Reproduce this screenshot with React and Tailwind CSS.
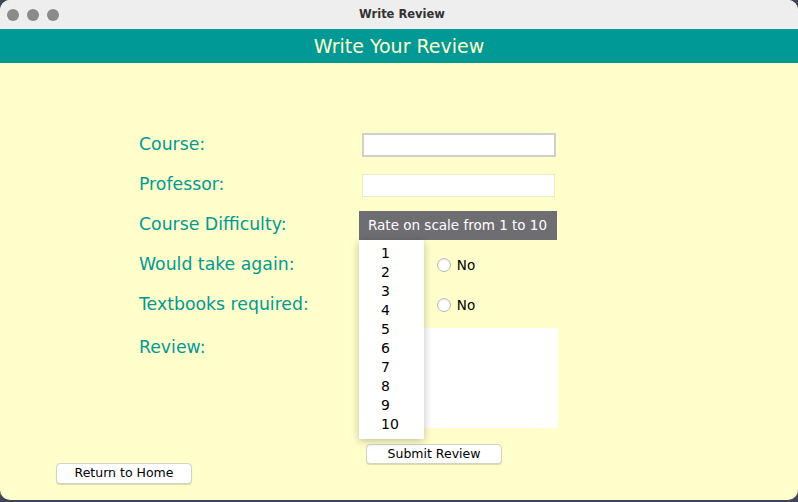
import React from "react";

const font = { fontFamily: '"DejaVu Sans", "Liberation Sans", sans-serif' };

function Radio({ label, faint }) {
  return (
    <label className={`flex items-center gap-[6px] text-[13.5px] ${faint ? "text-black/15" : "text-black"}`}>
      <span className="w-[14px] h-[14px] rounded-full bg-white border border-[#b8b8b8] shadow-[inset_0_1px_1px_rgba(0,0,0,0.08)]" />
      {label}
    </label>
  );
}

export default function App() {
  const options = [1, 2, 3, 4, 5, 6, 7, 8, 9, 10];

  return (
    <div className="w-[798px] h-[502px] bg-[#3d4556] overflow-hidden" style={font}>
      <div className="h-[500px] rounded-[10px] overflow-hidden bg-[#ffffcc] flex flex-col">
        {/* title bar */}
        <div className="h-[29px] bg-[#efeeef] flex items-center px-[7px] relative shrink-0">
          <div className="flex gap-[8px]">
            <span className="w-[12px] h-[12px] rounded-full bg-[#8a8a8a]" />
            <span className="w-[12px] h-[12px] rounded-full bg-[#8a8a8a]" />
            <span className="w-[12px] h-[12px] rounded-full bg-[#8a8a8a]" />
          </div>
          <div className="flex-1 text-center text-[11.5px] font-bold text-[#333] pr-[46px]">Write Review</div>
        </div>

        {/* header */}
        <div className="h-[34px] bg-[#019996] flex items-center justify-center shrink-0">
          <h1 className="text-[19px] text-[#ffffcc]">Write Your Review</h1>
        </div>

        {/* form */}
        <div className="flex-1 flex flex-col pt-[62px] relative">
          <div className="ml-[139px] flex flex-col text-[#019996] text-[17.3px]">
            <div className="h-[40px] flex items-center">
              <span className="w-[223px]">Course:</span>
              <input className="w-[194px] h-[24px] bg-white border-2 border-[#cfcfcf] outline-none" />
            </div>
            <div className="h-[40px] flex items-center">
              <span className="w-[223px]">Professor:</span>
              <input className="w-[193px] h-[23px] bg-white border border-[#ececc0] outline-none" />
            </div>
            <div className="h-[40px] flex items-center">
              <span className="w-[220px]">Course Difficulty:</span>
              <div className="relative">
                <div className="w-[198px] h-[29px] bg-[#6e6d72] text-white text-[13.5px] flex items-center pl-[9px]">
                  Rate on scale from 1 to 10
                </div>
                <ul className="absolute left-0 top-[29px] w-[65px] h-[199px] bg-white/95 shadow-[0_2px_8px_rgba(0,0,0,0.25)] z-10 pt-[4px] text-black text-[14px] leading-[19px]">
                  {options.map((n) => (
                    <li key={n} className="pl-[22px]">{n}</li>
                  ))}
                </ul>
              </div>
            </div>
            <div className="h-[40px] flex items-center">
              <span className="w-[233px]">Would take again:</span>
              <div className="flex gap-[23px]">
                <Radio label="Yes" faint />
                <Radio label="No" />
              </div>
            </div>
            <div className="h-[40px] flex items-center">
              <span className="w-[233px]">Textbooks required:</span>
              <div className="flex gap-[23px]">
                <Radio label="Yes" faint />
                <Radio label="No" />
              </div>
            </div>
            <div className="flex items-start pt-[3px]">
              <span className="w-[220px] pt-[7px]">Review:</span>
              <textarea className="w-[199px] h-[100px] bg-white outline-none resize-none" />
            </div>
          </div>

          <button className="ml-[366px] mt-[16px] w-[136px] h-[20px] bg-white rounded-[4px] border border-[#d4d4c0] shadow-[0_1px_1px_rgba(0,0,0,0.15)] text-[12.5px] text-black">
            Submit Review
          </button>
          <button className="ml-[56px] mt-[-1px] w-[136px] h-[21px] bg-white rounded-[4px] border border-[#d4d4c0] shadow-[0_1px_1px_rgba(0,0,0,0.15)] text-[12.5px] text-black">
            Return to Home
          </button>
        </div>
      </div>
    </div>
  );
}
